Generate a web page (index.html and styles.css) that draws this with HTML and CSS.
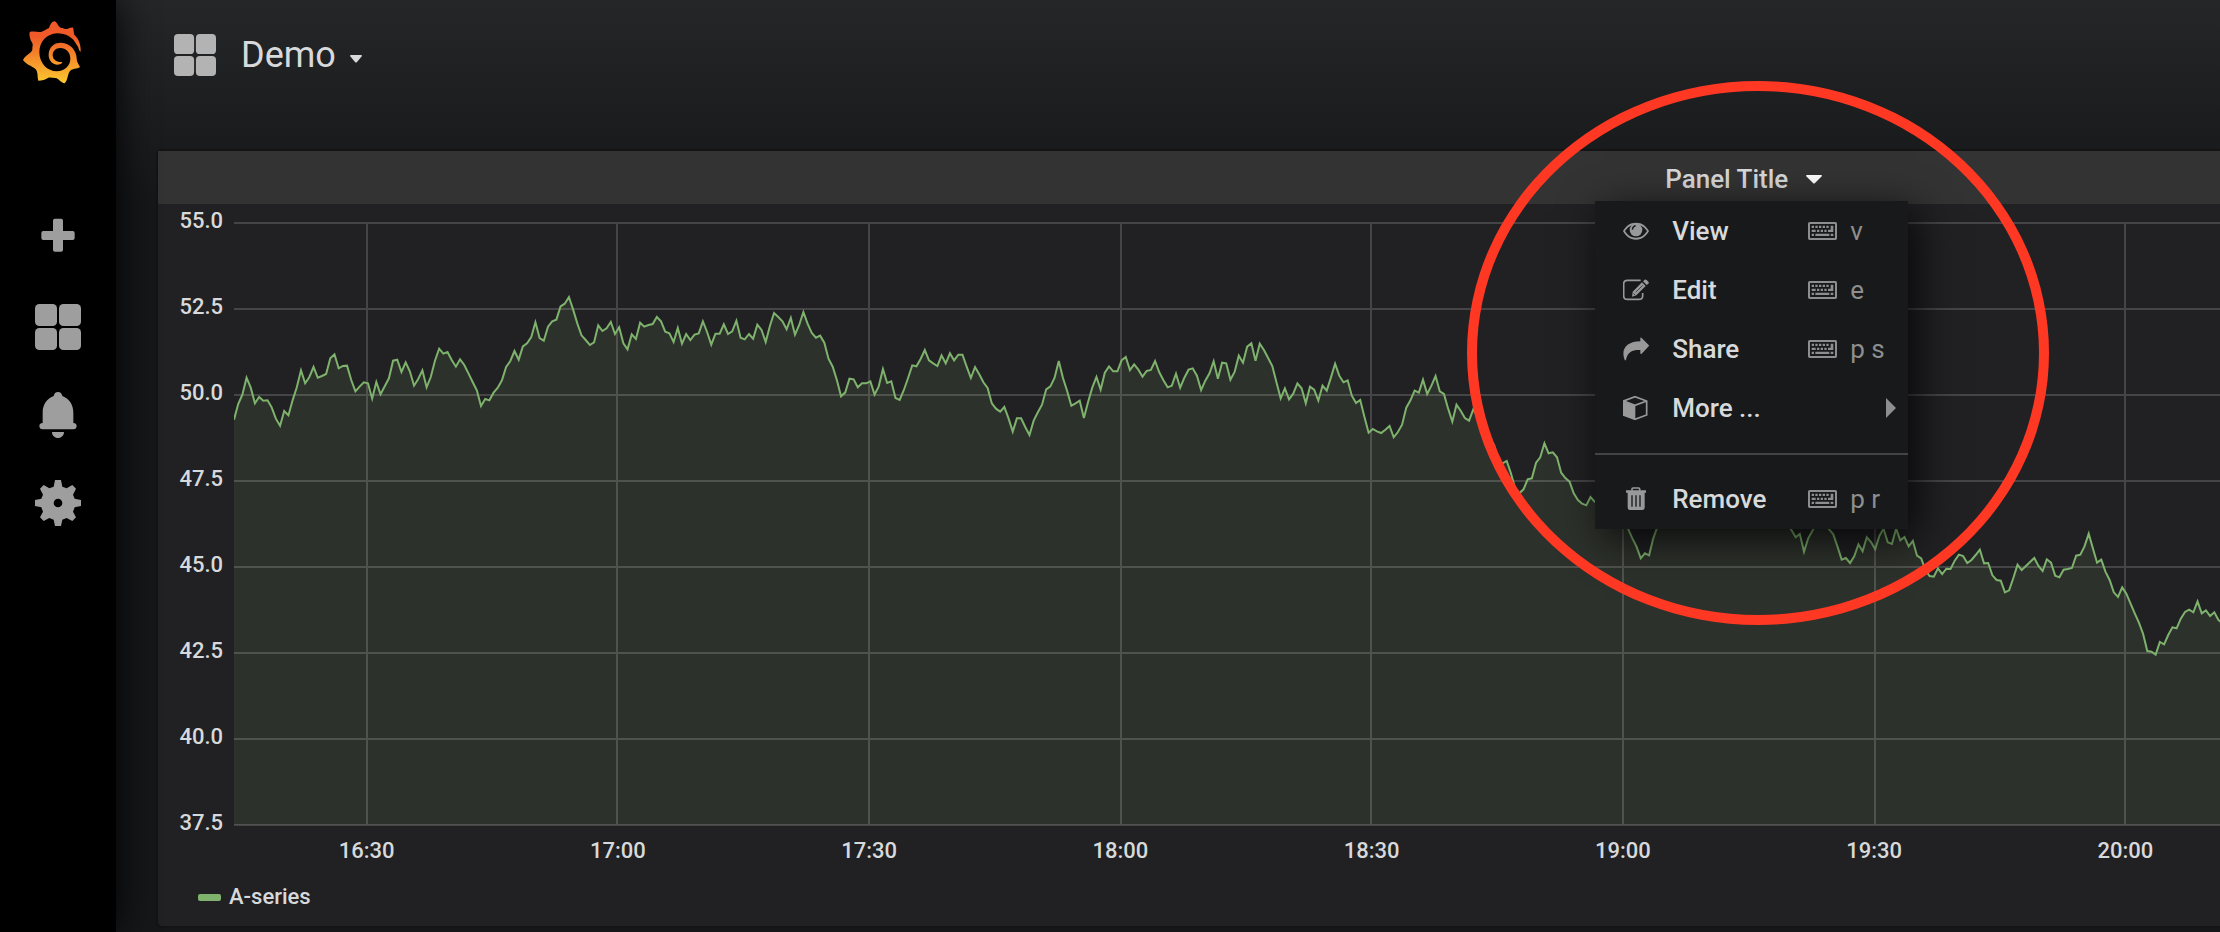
FILE: index.html
```
<!DOCTYPE html>
<html lang="en">
<head>
    <meta charset="UTF-8">
    <title>Demo</title>
    <link rel="stylesheet" href="styles.css">
</head>
<body>
    <svg width="0" height="0" class="symbols" aria-hidden="true">
        <symbol id="squares" viewBox="0 0 138 138">
            <rect width="66" height="66" rx="13"/>
            <rect x="72" width="66" height="66" rx="13"/>
            <rect y="72" width="66" height="66" rx="13"/>
            <rect x="72" y="72" width="66" height="66" rx="13"/>
        </symbol>
        <symbol id="keyboard" viewBox="0 0 87 54">
            <path fill-rule="evenodd" d="M5 0h77q5 0 5 5v44q0 5-5 5H5q-5 0-5-5V5q0-5 5-5zM6 6v42h75V6z"/>
            <path d="M11 11h7v7h-7zM22 11h7v7h-7zM33 11h7v7h-7zM44 11h7v7h-7zM55 11h7v7h-7zM11 23h12v7H11zM27 23h7v7h-7zM38 23h7v7h-7zM49 23h7v7h-7zM60 23h8V11h8v19H60zM11 35h7v7h-7zM22 35h42v7H22zM68 35h8v7h-8z"/>
        </symbol>
    </svg>

    <div class="app">
        <nav class="sidemenu">
            <a href="#" class="logo" aria-label="Home">
                <svg width="60" height="64" viewBox="66 58 180 192">
                    <defs>
                        <linearGradient id="flame" x1="0" y1="0" x2="0" y2="1">
                            <stop offset="0.25" stop-color="#f05a28"/>
                            <stop offset="1" stop-color="#fbca2f"/>
                        </linearGradient>
                    </defs>
                    <path fill="url(#flame)" d="M164 62C172 65 173 77 182 81C190 82 195 86 202 85C207 83 212 80 219 81C222 87 220 94 223 102C237 115 243 133 242 153C235 149 238 142 230 132C218 109 197 98 172 98C139 99 118 124 118 155C118 188 142 212 170 212C195 211 211 194 211 174C211 155 198 142 181 142C166 142 158 152 158 164C159 179 172 186 187 184Q184 192 171 192C154 190 145 176 146 160C147 139 163 125 184 126C210 127 229 148 230 173C230 184 235 190 240 199C231 206 216 203 210 211C202 220 205 236 194 248C182 246 176 234 168 232C160 233 153 229 145 231C136 237 126 240 115 240C112 231 114 219 110 210C105 198 79 194 69 178C76 162 94 158 97 147C96 140 100 134 97 127C90 117 87 105 89 94C101 90 112 95 123 94C130 92 139 86 147 82C150 74 154 63 164 62Z"/>
                </svg>
            </a>
            <a href="#" class="nav-item" aria-label="Create">
                <svg width="46" height="46" viewBox="0 0 138 138">
                    <path d="M60 8h18q6 0 6 6v31h29q6 0 6 6v15q0 6-6 6H84v29q0 6-6 6H60q-6 0-6-6V72H25q-6 0-6-6V51q0-6 6-6h29V14q0-6 6-6z"/>
                </svg>
            </a>
            <a href="#" class="nav-item" aria-label="Dashboards">
                <svg width="46" height="46"><use href="#squares"/></svg>
            </a>
            <a href="#" class="nav-item" aria-label="Alerting">
                <svg width="46" height="46" viewBox="0 0 138 138">
                    <path d="M69 0C76 0 81 5 82 12C104 20 115 39 115 62V93C121 93 125 97 125 102C125 108 121 112 115 112H23C17 112 13 108 13 102C13 97 17 93 23 93V62C23 39 34 20 56 12C57 5 62 0 69 0ZM51 120H87C87 131 79 138 69 138S51 131 51 120Z"/>
                </svg>
            </a>
            <a href="#" class="nav-item" aria-label="Configuration">
                <svg width="46" height="46" viewBox="0 0 138 138">
                    <path fill-rule="evenodd" d="M60 0H78L82 20L95 25L112 15L123 26L114 44L119 56L138 60V78L119 82L114 95L123 112L112 123L95 114L82 119L78 138H60L56 119L43 114L26 123L15 112L24 95L19 82L0 78V60L19 56L24 44L15 26L26 15L43 25L56 20ZM69 56A13 13 0 1 0 69 82A13 13 0 1 0 69 56Z"/>
                </svg>
            </a>
        </nav>

        <main class="page">
            <header class="navbar">
                <svg class="navbar-icon" width="42" height="42"><use href="#squares"/></svg>
                <button class="navbar-title" type="button">Demo
                    <svg width="12" height="8" viewBox="0 0 12 8"><path d="M0 1Q0 0 1 0H11Q12 0 12 1L7 7Q6 8 5 7Z"/></svg>
                </button>
            </header>

            <section class="panel">
                <div class="panel-header">
                    <div class="panel-dropdown">
                        <button class="panel-title" type="button">Panel Title
                            <svg width="16" height="9" viewBox="0 0 16 9"><path d="M0 1Q0 0 1 0H15Q16 0 16 1L9 8Q8 9 7 8Z"/></svg>
                        </button>
                        <div class="dropdown-menu">
                            <a href="#" class="menu-item">
                                <svg class="menu-icon" viewBox="0 0 78 72">
                                    <path fill-rule="evenodd" d="M39 11C58 11 69 21 78 36C69 52 58 62 39 62C20 62 9 52 0 36C9 21 20 11 39 11ZM39 17C24 17 14 24 6 36C14 49 24 56 39 56C54 56 64 49 72 36C64 24 54 17 39 17Z"/>
                                    <circle cx="39" cy="33" r="19"/>
                                    <path class="cutout" d="M28 32Q29 22 38 20"/>
                                </svg>
                                <span class="menu-text">View</span>
                                <span class="shortcut"><svg width="29" height="18"><use href="#keyboard"/></svg>v</span>
                            </a>
                            <a href="#" class="menu-item">
                                <svg class="menu-icon" viewBox="0 0 78 72">
                                    <path class="outline" d="M53 7H13Q2 7 2 18V53Q2 64 13 64H47Q59 64 59 53V45"/>
                                    <path d="M29 41L57 13L68 24L40 52L27 56ZM60 10L65 5Q68 3 71 6L76 11Q79 14 76 17L71 21Z"/>
                                    <path class="cutout thin" d="M38 43L59 22M31 46L36 51"/>
                                </svg>
                                <span class="menu-text">Edit</span>
                                <span class="shortcut"><svg width="29" height="18"><use href="#keyboard"/></svg>e</span>
                            </a>
                            <a href="#" class="menu-item">
                                <svg class="menu-icon" viewBox="0 0 78 72">
                                    <path d="M52 2Q54 1 56 3L77 24Q79 26 77 28L56 50Q52 52 52 48V39C30 38 15 42 9 68Q8 72 5 69C-8 35 13 13 52 13Z"/>
                                </svg>
                                <span class="menu-text">Share</span>
                                <span class="shortcut"><svg width="29" height="18"><use href="#keyboard"/></svg>p s</span>
                            </a>
                            <a href="#" class="menu-item">
                                <svg class="menu-icon" viewBox="0 0 78 72">
                                    <path class="outline" d="M36 2L71 15V57L36 70L2 57V15ZM71 15L36 28L2 15"/>
                                    <path d="M1 16L37 29V71L1 58Z"/>
                                </svg>
                                <span class="menu-text">More ...</span>
                                <svg class="submenu-caret" width="10" height="20" viewBox="0 0 10 20"><path d="M0 0L10 10L0 20Z"/></svg>
                            </a>
                            <hr class="divider">
                            <a href="#" class="menu-item">
                                <svg class="menu-icon" viewBox="0 0 78 72">
                                    <path class="outline" d="M27 11V6Q27 3 30 3H47Q50 3 50 6V11"/>
                                    <path d="M9 10H69V17H9ZM14 17H65V62Q65 69 58 69H21Q14 69 14 62Z"/>
                                    <path class="cutout" d="M27 25V59M39 25V59M51 25V59"/>
                                </svg>
                                <span class="menu-text">Remove</span>
                                <span class="shortcut"><svg width="29" height="18"><use href="#keyboard"/></svg>p r</span>
                            </a>
                        </div>
                        <div class="highlight"></div>
                    </div>
                </div>

                <div class="graph">
                    <div class="y-axis">
                        <span>55.0</span>
                        <span>52.5</span>
                        <span>50.0</span>
                        <span>47.5</span>
                        <span>45.0</span>
                        <span>42.5</span>
                        <span>40.0</span>
                        <span>37.5</span>
                    </div>
                    <svg class="plot" viewBox="0 0 5958 1812" preserveAspectRatio="none">
                        <path class="area" id="area"/>
                        <path class="grid" id="grid"/>
                        <path class="line" id="line"/>
                    </svg>
                    <div class="x-axis">
                        <span>16:30</span>
                        <span>17:00</span>
                        <span>17:30</span>
                        <span>18:00</span>
                        <span>18:30</span>
                        <span>19:00</span>
                        <span>19:30</span>
                        <span>20:00</span>
                    </div>
                </div>

                <div class="legend">
                    <span class="legend-color"></span>
                    <a href="#">A-series</a>
                </div>
            </section>
        </main>
    </div>

    <script>
        // samples every 30s, in blocks that share a base offset
        const blocks = [
            { base: 114, samples: [
                479,432,404,353,383,430,411,422,421,442,476,497,453,466,421,382,331,370,351,321,
                353,348,342,295,283,325,318,317,360,394,380,367,370,416,366,403,379,355,302,299,
                336,307,334,377,357,331,382,351,302,266,281,276,300,320,298,315,340,366,391,438,
                417,421,398,383,361,321,303,273,299,259,250,231,187,234,242,200,184,179,139,131,
                111,149,190,226,240,255,247,196,213,205,186,222,202,250,268,223,237,188,200,195,
                192,171,184,215,220,246,204,251,222,240,224,220,184,216,254,221,221,193,222,214,
                182,233,238,222,236,194,210,246,198,159,171,184,208,174,224,195,156,191,219,233,
                227,248,296,320,360,409,397,356,358,382,370,370,364,404,379,327,369,364,414,420,
                390,354,316,319,297,270,301,310,318,286,310,280,301,284,284,320,354,321,343,367,
                384,430,446,455,441,475,515,475,475,501,525,482,457
            ] },
            { base: 264, samples: [
                284,238,229,203,153,204,243,287,280,272,324,276,233,201,239,188,169,184,184,151,
                141,180,163,179,200,183,180,153,187,211,232,227,191,233,203,179,175,197,240,212,
                190,154,206,158,160,209,186,137,158,110,100,152,101,120,144,168,217,265,235,268,
                251,220,235,280,230,239,272,227,242,203,161,197,217,211,257,279,270,320,368,357,
                364,369,359,348,382,366,344,293,271,242,248,209,252,227,198,244
            ] },
            { base: 474, samples: [
                42,86,125,74,92,114,122,88,110,130,150,175,196,252,250,243,280,325,340,328,
                298,295,248,232,190,220,217,232,278,294,305,340,360,371,376,351,365,372,380,365,
                370,390,400,420,447,475,500,535,520,526,475,440,420,400,390,370,380,400,390,370,
                350,360,370,350,340,330,350,370,360,340,350,370,390,380,370,390,400,390,410,400,
                420,410,430,450,472
            ] },
            { base: 774, samples: [
                162,215,175,153,125,110,130,148,163,200,239,234,249,229,193,214,172,186,208,168,
                146,187,192,146,181,171,199,183,227,235,270,288,290,265,282,266,267,242,224,228,
                249,240,225,209,250,249,286,300,302,337,331,294,254,270,258,246,234,258,273,238,
                248,287,292,269,267,264,227,224,199,161,205,248,239,275,300,337,351,322,341,371,
                400,428,462,513,515,524,486,493,465,442,445,416,396,389,397,364,400,391,408,397,
                420,430
            ] }
        ];
        const step = 12.56;
        const bottom = 1809;

        const values = blocks.flatMap(b => b.samples.map(v => v + b.base));
        const points = values.map((v, i) => `${(i * step).toFixed(1)} ${v}`).join('L');
        document.getElementById('line').setAttribute('d', `M${points}`);
        document.getElementById('area').setAttribute('d', `M0 ${bottom}L${points}V${bottom}Z`);

        let grid = '';
        for (let i = 0; i < 8; i++) {
            grid += `M0 ${3 + i * 258}H5958`;
        }
        for (const x of [133, 383, 635, 887, 1137, 1389, 1641, 1891]) {
            grid += `M${x * 3} 3V${bottom}`;
        }
        document.getElementById('grid').setAttribute('d', grid);
    </script>
</body>
</html>
```
FILE: styles.css
```
body {
    margin: 0;
    background: #161719;
    color: #d8d9da;
    font-family: Roboto, "Liberation Sans", sans-serif;
    font-size: 26px;
}

a {
    color: inherit;
    text-decoration: none;
}

button {
    padding: 0;
    border: none;
    background: none;
    color: inherit;
    font: inherit;
    cursor: pointer;
}

svg {
    fill: currentColor;
    flex: none;
}

.symbols {
    position: absolute;
}

.app {
    display: flex;
    min-height: 100vh;
    overflow: hidden;
}

/* side menu */
.sidemenu {
    display: flex;
    flex-direction: column;
    flex: none;
    width: 116px;
    background: #000;
    box-shadow: 0 0 40px #000;
    color: #9e9e9e;
    z-index: 1;
}

.logo {
    height: 176px;
    padding: 20px 0 0 22px;
    box-sizing: border-box;
    margin-bottom: 19px;
}

.nav-item {
    display: flex;
    align-items: center;
    justify-content: center;
    height: 88px;
}

/* page */
.page {
    flex: 1;
    min-width: 0;
    padding-left: 42px;
    background: linear-gradient(#242628, #161719 200px);
}

.navbar {
    display: flex;
    align-items: center;
    gap: 25px;
    height: 151px;
    padding: 0 16px 41px;
    box-sizing: border-box;
}

.navbar-icon {
    color: #b3b3b3;
}

.navbar-title {
    display: flex;
    align-items: center;
    gap: 14px;
    font-size: 36px;
}

.navbar-title svg {
    margin-top: 8px;
}

/* panel */
.panel {
    background: #212124;
    border-radius: 4px 0 0 4px;
    box-shadow: 0 0 0 2px #141414;
    padding-bottom: 15px;
}

.panel-header {
    background: #333;
    height: 53px;
    margin-bottom: 18px;
}

.panel-dropdown {
    position: relative;
    width: 313px;
    height: 50px;
    margin-left: 69.7%;
}

.panel-title {
    display: flex;
    align-items: center;
    gap: 18px;
    height: 56px;
    margin-left: 70px;
    font-weight: 500;
}

.panel-title svg {
    color: #fff;
}

.dropdown-menu {
    position: absolute;
    top: 50px;
    left: 0;
    width: 100%;
    padding-bottom: 1px;
    background: #17191a;
    box-shadow: 8px 10px 40px rgba(0, 0, 0, 0.8);
    z-index: 2;
}

.menu-item {
    display: grid;
    grid-template-columns: 49px 136px 1fr;
    align-items: center;
    height: 59px;
    padding: 0 12px 0 28px;
}

.menu-text {
    font-weight: 500;
}

.menu-icon {
    width: 26px;
    height: 24px;
    color: #999;
}

.menu-icon .outline {
    fill: none;
    stroke: currentColor;
    stroke-width: 5;
}

.menu-icon .cutout {
    fill: none;
    stroke: #17191a;
    stroke-width: 4;
}

.menu-icon .thin {
    stroke-width: 2;
}

.shortcut {
    display: flex;
    align-items: center;
    gap: 13px;
    color: #8e8e8e;
}

.submenu-caret {
    justify-self: end;
    color: #8e8e8e;
}

.divider {
    height: 2px;
    margin: 16px 0 14px;
    border: none;
    background: #434445;
}

/* ring drawn round the open menu */
.highlight {
    position: absolute;
    top: -70px;
    left: -128px;
    width: 582px;
    height: 544px;
    box-sizing: border-box;
    border: 10px solid #ff3824;
    border-radius: 50%;
    pointer-events: none;
    z-index: 3;
}

/* graph */
.graph {
    display: grid;
    grid-template-columns: 76px 1fr;
    font-size: 22px;
    font-weight: 500;
    line-height: 26px;
}

.y-axis {
    display: flex;
    flex-direction: column;
    justify-content: space-between;
    margin: -14px 0 -10px;
    padding-right: 11px;
    text-align: right;
}

.plot {
    display: block;
    width: 100%;
    height: 604px;
}

.plot path {
    fill: none;
    vector-effect: non-scaling-stroke;
}

.plot .area {
    fill: #2d312b;
}

.plot .grid {
    stroke: rgba(200, 200, 200, 0.22);
    stroke-width: 2px;
}

.plot .line {
    stroke: #7eb26d;
    stroke-width: 2px;
}

.x-axis {
    grid-column: 2;
    display: grid;
    grid-template-columns: repeat(8, 1fr);
    margin: 12px -31px 0 7px;
    text-align: center;
}

.legend {
    display: flex;
    align-items: center;
    gap: 8px;
    margin-top: 19px;
    padding-left: 40px;
    font-size: 22px;
    font-weight: 500;
    line-height: 28px;
}

.legend-color {
    width: 23px;
    height: 7px;
    border-radius: 2px;
    background: #7eb26d;
}
```
